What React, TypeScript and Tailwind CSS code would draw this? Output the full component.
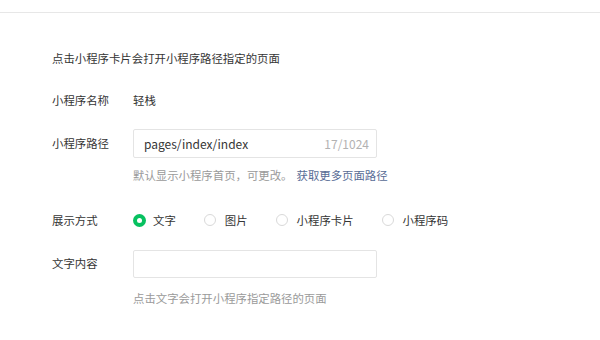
import React, { useState } from 'react';

const font = { fontFamily: '"Noto Sans CJK SC", "Noto Sans", sans-serif' };

const options = ['文字', '图片', '小程序卡片', '小程序码'];

const Radio = ({ checked }: { checked: boolean }) =>
  checked ? (
    <span className="flex h-[13px] w-[13px] items-center justify-center rounded-full bg-[#07c160]">
      <span className="h-[5px] w-[5px] rounded-full bg-white" />
    </span>
  ) : (
    <span className="h-[12px] w-[12px] rounded-full border border-[#d9d9d9] bg-white" />
  );

export default function App() {
  const [mode, setMode] = useState(0);

  return (
    <div className="h-[340px] w-[600px] bg-white pt-3 text-[11.4px] text-[#353535]" style={font}>
      <div className="border-t border-[#e7e7e7] pl-[52px]">
        <p className="mt-[37px] h-4 leading-4">点击小程序卡片会打开小程序路径指定的页面</p>

        <div className="mt-[26px] flex h-4 items-center leading-4">
          <span className="w-[81px]">小程序名称</span>
          <span>轻栈</span>
        </div>

        <div className="mt-[21px] flex items-center">
          <span className="w-[81px]">小程序路径</span>
          <div className="flex h-[29px] w-[244px] items-center justify-between rounded-[2px] border border-[#e4e4e4] pl-[10px] pr-[7px] text-[12px]">
            <span className="text-[#353535]">pages/index/index</span>
            <span className="text-[#b2b2b2]">17/1024</span>
          </div>
        </div>

        <p className="ml-[81px] mt-[9px] h-4 leading-4 text-[#9a9a9a]">
          默认显示小程序首页，可更改。
          <span className="ml-1 text-[#576b95]">获取更多页面路径</span>
        </p>

        <div className="mt-[29px] flex h-4 items-center leading-4">
          <span className="w-[81px]">展示方式</span>
          <div className="flex items-center">
            {options.map((o, i) => (
              <button
                key={o}
                onClick={() => setMode(i)}
                className={mode === i ? 'mr-[28px] flex items-center gap-[7px]' : 'mr-[28px] flex items-center gap-[9px]'}
              >
                <Radio checked={mode === i} />
                <span>{o}</span>
              </button>
            ))}
          </div>
        </div>

        <div className="mt-[22px] flex items-center">
          <span className="w-[81px]">文字内容</span>
          <div className="h-[28px] w-[244px] rounded-[2px] border border-[#e4e4e4]" />
        </div>

        <p className="ml-[81px] mt-[12px] h-4 leading-4 text-[#9a9a9a]">点击文字会打开小程序指定路径的页面</p>
      </div>
    </div>
  );
}
